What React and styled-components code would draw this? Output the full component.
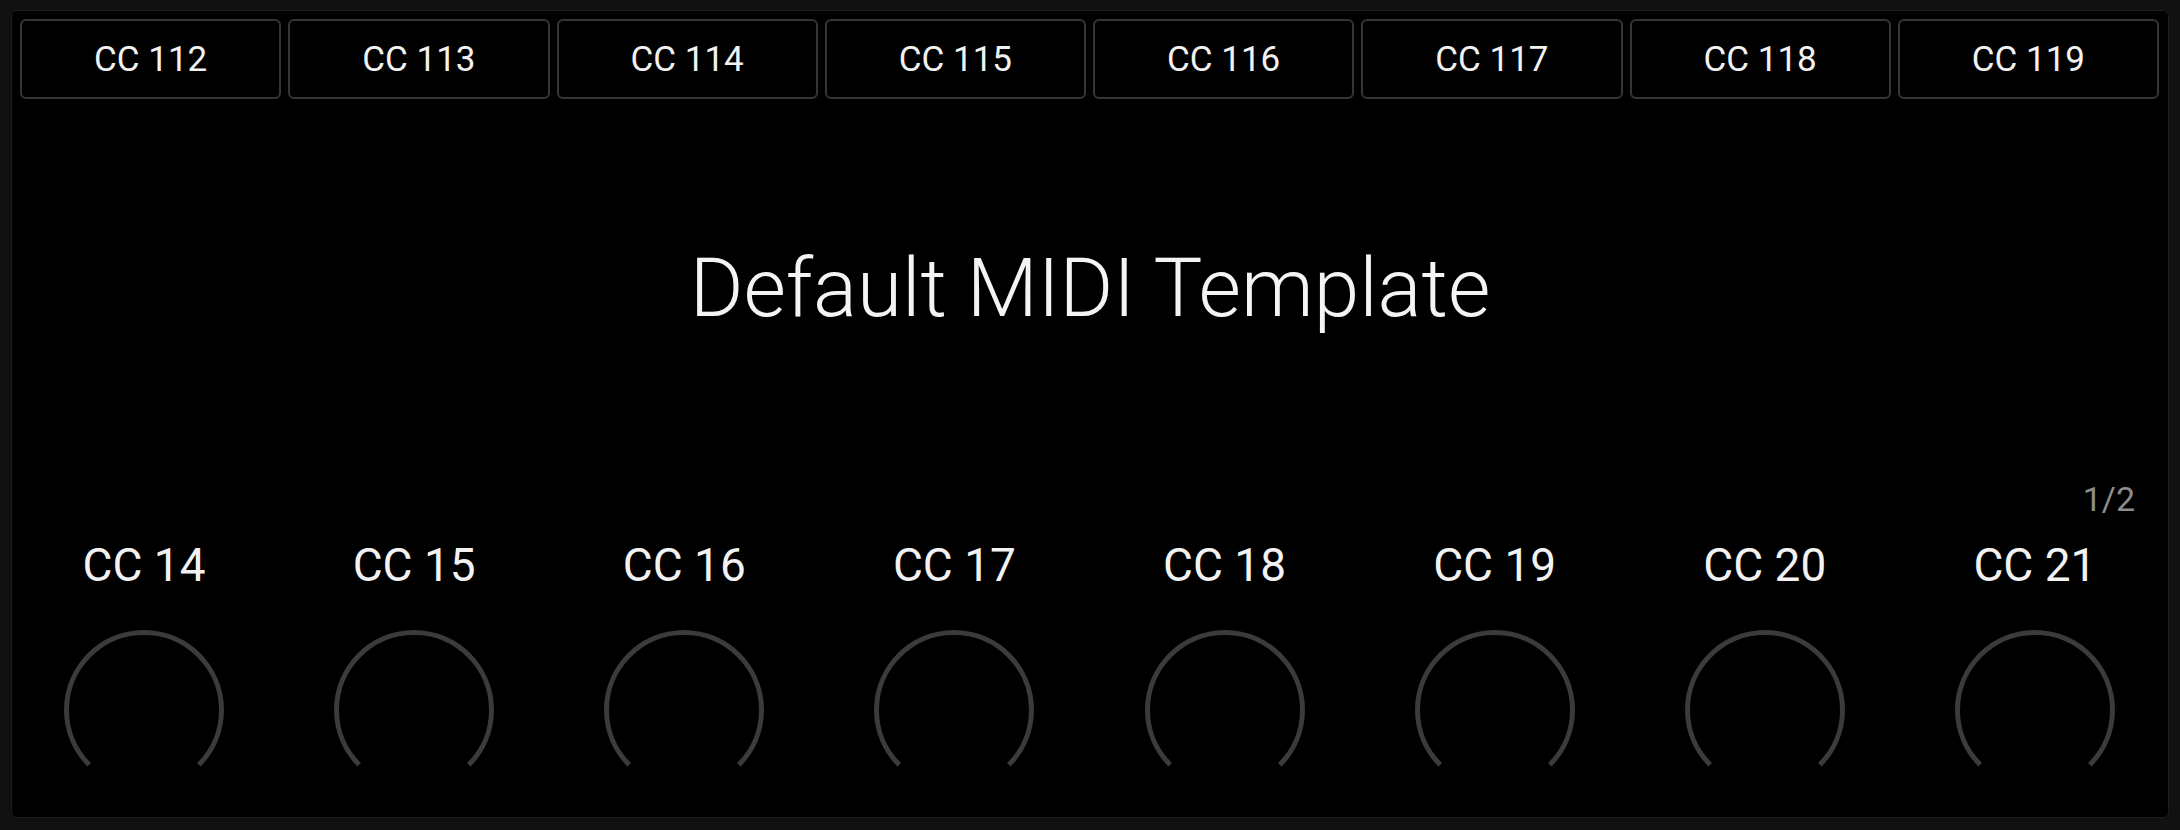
import React from "react";
import styled, { createGlobalStyle } from "styled-components";

const GlobalStyle = createGlobalStyle`
  html, body {
    margin: 0;
    padding: 0;
    background: #111111;
  }
  body {
    font-family: Roboto, "Liberation Sans", Arial, sans-serif;
  }
  * {
    box-sizing: border-box;
  }
`;

const Page = styled.div`
  width: 2180px;
  height: 830px;
  padding: 10px 11px 12px 11px;
`;

const Panel = styled.div`
  height: 100%;
  display: flex;
  flex-direction: column;
  background: #000;
  border: 1px solid #1c1c1c;
  border-radius: 6px;
  overflow: hidden;
`;

const ButtonRow = styled.div`
  display: flex;
  gap: 7px;
  padding: 8px 9px 0 8px;
`;

const CCButton = styled.button`
  flex: 1;
  height: 80px;
  background: #000;
  border: 2px solid #353535;
  border-radius: 6px;
  color: #f2f2f2;
  font-family: Roboto, "Liberation Sans", Arial, sans-serif;
  font-size: 35px;
  font-weight: 400;
  cursor: pointer;
  padding: 0;
`;

const TitleArea = styled.div`
  flex: 1;
  display: flex;
  align-items: center;
  justify-content: center;
`;

const Title = styled.h1`
  margin: 0;
  font-size: 82px;
  font-weight: 300;
  line-height: 1;
  color: #f4f4f4;
`;

const PageIndicator = styled.div`
  height: 45px;
  line-height: 45px;
  text-align: right;
  padding-right: 33px;
  font-size: 34px;
  color: #8c8c8c;
`;

const KnobRow = styled.div`
  display: grid;
  grid-template-columns: repeat(8, 1fr);
  margin: 0 -2px 0 -3px;
  padding-bottom: 27px;
`;

const KnobCell = styled.div`
  display: flex;
  flex-direction: column;
  align-items: center;
`;

const KnobLabel = styled.div`
  margin-top: 20px;
  height: 46px;
  font-size: 46px;
  line-height: 1;
  color: #f2f2f2;
`;

const KnobSvg = styled.svg`
  margin-top: 42px;
  display: block;
`;

const Knob = () => {
  const c = 80;
  const r = 77.5;
  const d = r * Math.SQRT1_2;
  return (
    <KnobSvg width="160" height="160" viewBox="0 0 160 160">
      <path
        d={`M ${c - d} ${c + d} A ${r} ${r} 0 1 1 ${c + d} ${c + d}`}
        fill="none"
        stroke="#3b3b3b"
        strokeWidth="5"
      />
    </KnobSvg>
  );
};

const buttons = [112, 113, 114, 115, 116, 117, 118, 119];
const knobs = [14, 15, 16, 17, 18, 19, 20, 21];

const App = () => {
  return (
    <>
      <GlobalStyle />
      <Page>
        <Panel>
          <ButtonRow>
            {buttons.map((n) => (
              <CCButton key={n}>CC {n}</CCButton>
            ))}
          </ButtonRow>
          <TitleArea>
            <Title>Default MIDI Template</Title>
          </TitleArea>
          <PageIndicator>1/2</PageIndicator>
          <KnobRow>
            {knobs.map((n) => (
              <KnobCell key={n}>
                <KnobLabel>CC {n}</KnobLabel>
                <Knob />
              </KnobCell>
            ))}
          </KnobRow>
        </Panel>
      </Page>
    </>
  );
};

export default App;
